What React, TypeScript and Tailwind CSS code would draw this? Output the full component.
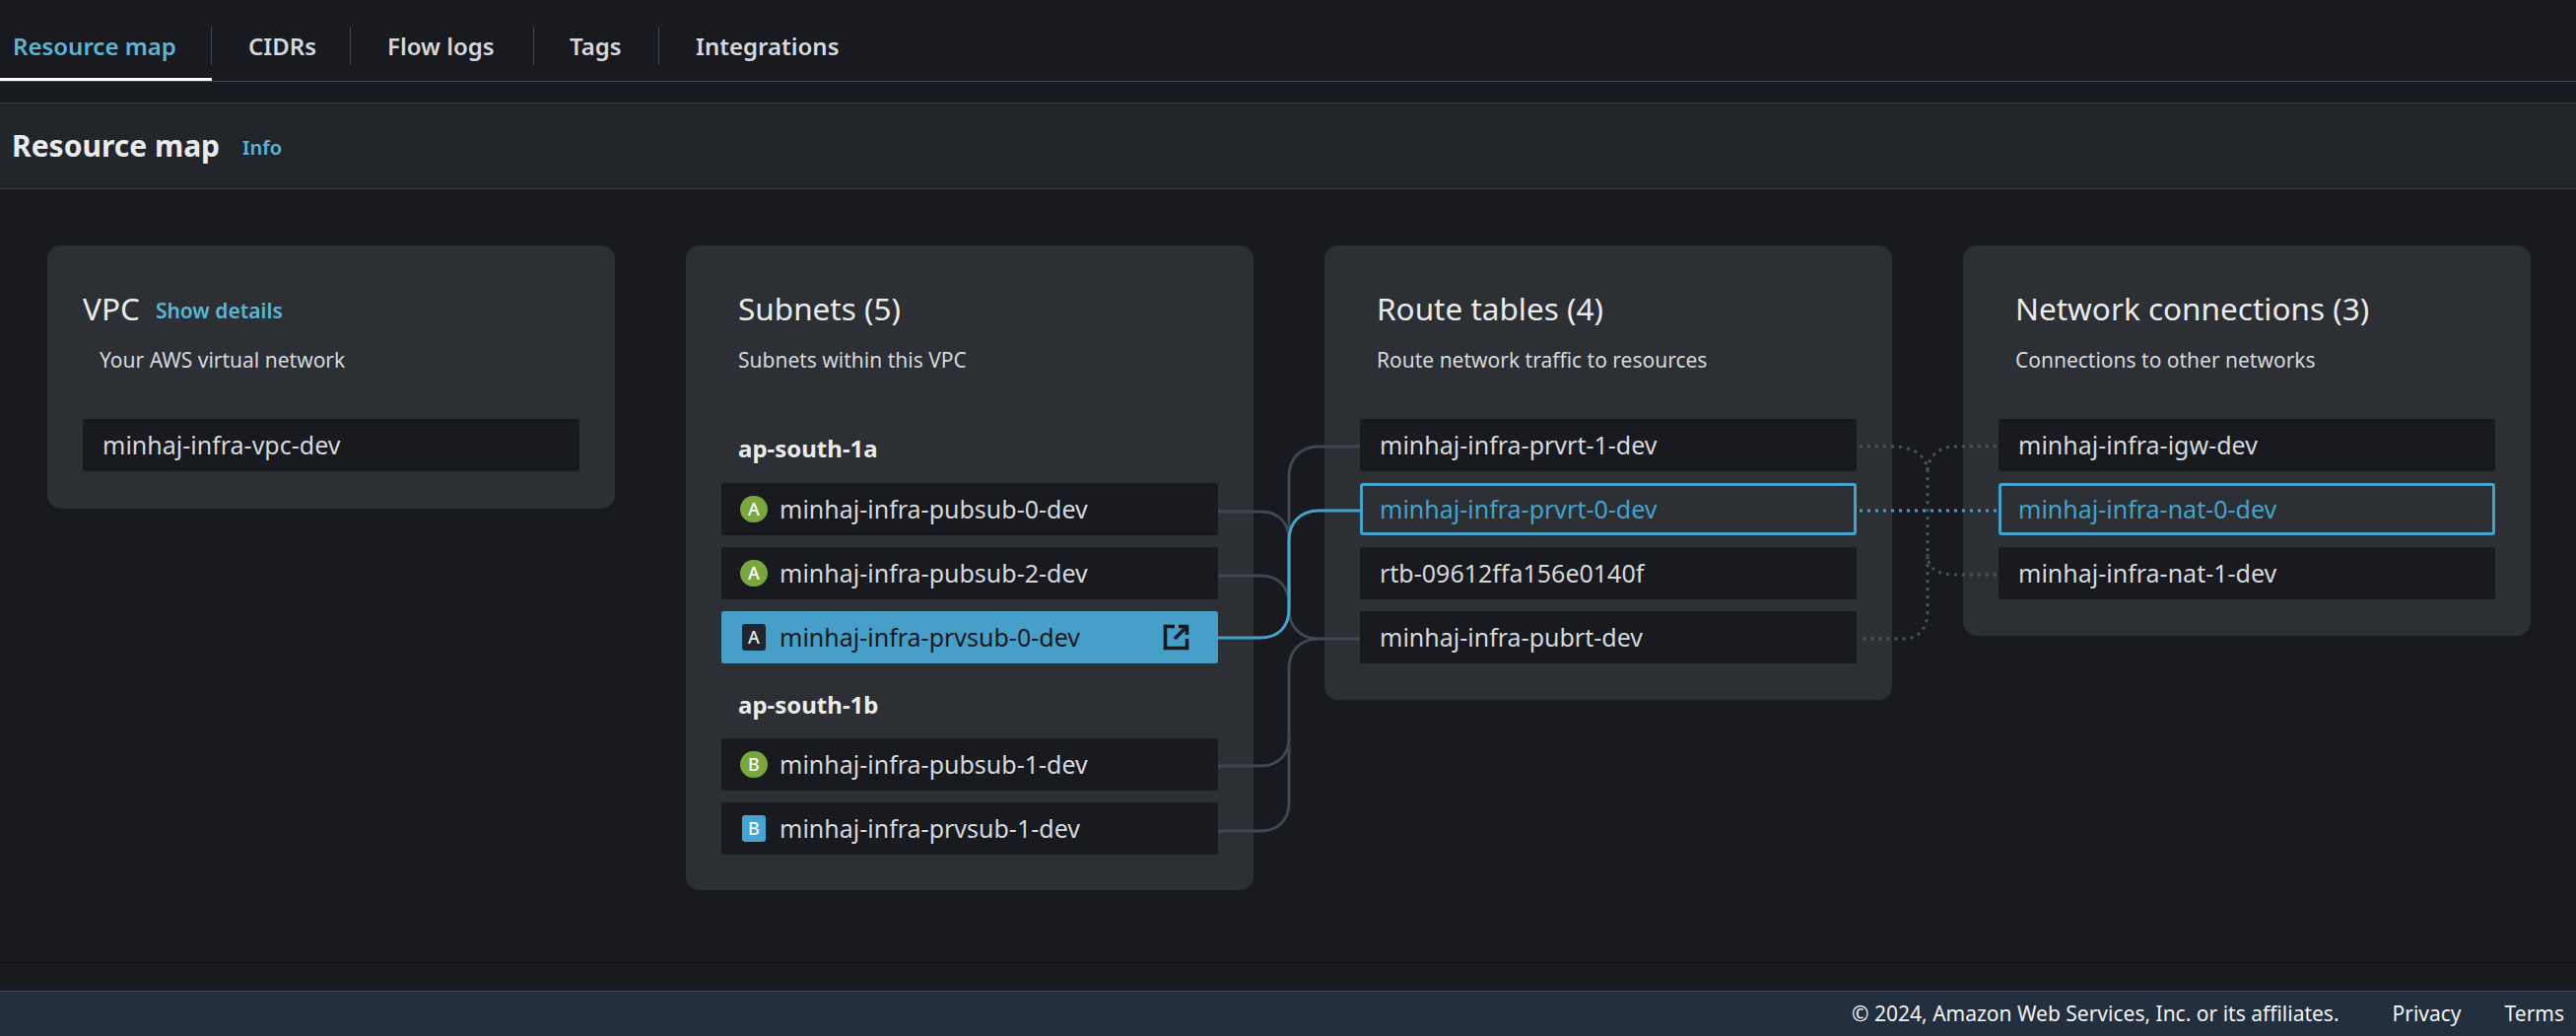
import React from "react";

const font = { fontFamily: '"Noto Sans", sans-serif' };

function Badge({ letter, kind }: { letter: string; kind: "pub" | "prv" | "sel" }) {
  const shape =
    kind === "pub"
      ? "rounded-full bg-[#7aa640] text-white w-[28px]"
      : kind === "prv"
      ? "rounded-[3px] bg-[#44a5d2] text-white w-[24px] mx-[2px]"
      : "rounded-[3px] bg-[#1f2630] text-[#e9ebed] w-[24px] mx-[2px]";
  return (
    <span className={`flex h-[27px] shrink-0 items-center justify-center text-[18px] font-medium ${shape}`}>
      {letter}
    </span>
  );
}

function Row({ name, h = "h-[53px]", className = "bg-[#181a1f] text-[#d5d8dc]" }: { name: string; h?: string; className?: string }) {
  return (
    <div className={`flex items-center rounded-[3px] px-[20px] text-[25px] ${h} ${className}`}>{name}</div>
  );
}

function SubnetRow({ name, letter, kind }: { name: string; letter: string; kind: "pub" | "prv" | "sel" }) {
  const sel = kind === "sel";
  return (
    <div className={`flex h-[53px] items-center rounded-[3px] pl-[19px] pr-[29px] text-[25px] ${sel ? "bg-[#469fc8] text-[#16191f]" : "bg-[#181a1f] text-[#d5d8dc]"}`}>
      <Badge letter={letter} kind={kind} />
      <span className="ml-[12px] flex-1">{name}</span>
      {sel && (
        <svg width="27" height="27" viewBox="0 0 27 27" fill="none" stroke="#16191f" strokeWidth="3.6">
          <path d="M12 2.5H2.5V24.5H24.5V15" />
          <path d="M16 2.5H24.5V11" />
          <path d="M24 3L12 15" />
        </svg>
      )}
    </div>
  );
}

function CardHead({ title, desc }: { title: string; desc: string }) {
  return (
    <div className="pl-[17px]">
      <h3 className="h-[36px] text-[31.5px] leading-[36px] font-normal text-[#e9ebed]">{title}</h3>
      <p className="mt-[20px] h-[28px] text-[21px] leading-[28px] text-[#d5d8dc]">{desc}</p>
    </div>
  );
}

const tabs = [
  { t: "Resource map", c: "w-[215px] pl-[13px] text-[#5bb5d6] border-r border-[#414750]" },
  { t: "CIDRs", c: "w-[141px] pl-[37px] text-[#d5d8dc] border-r border-[#414750]" },
  { t: "Flow logs", c: "w-[186px] pl-[37px] text-[#d5d8dc] border-r border-[#414750]" },
  { t: "Tags", c: "w-[127px] pl-[36px] text-[#d5d8dc] border-r border-[#414750]" },
  { t: "Integrations", c: "pl-[37px] text-[#d5d8dc]" },
];

export default function App() {
  return (
    <div className="relative flex h-[1051px] w-[2614px] flex-col overflow-hidden bg-[#181a1f]" style={font}>
      <div className="flex h-[83px] border-b border-[#414750]">
        {tabs.map(({ t, c }, i) => (
          <div key={t} className={`h-[82px] border-b-[3px] pt-[27px] ${i === 0 ? "border-white" : "border-transparent"}`}>
            <div className={`flex h-[39px] items-center text-[24px] font-semibold ${c}`}>{t}</div>
          </div>
        ))}
      </div>

      <div className="mt-[21px] flex h-[88px] items-center gap-[23px] border-y border-[#363a40] bg-[#22262b] pb-[2px] pl-[12px]">
        <h2 className="text-[30px] font-bold text-[#e9ebed]">Resource map</h2>
        <a className="mt-[6px] text-[20px] font-semibold text-[#5bb5d6]">Info</a>
      </div>

      <main className="flex flex-1 items-start gap-[72px] border-b border-[#0d0e12] pl-[48px] pt-[57px]">
        <section className="w-[576px] rounded-[14px] bg-[#2c2f34] px-[36px] pt-[46px] pb-[38px]">
          <div className="flex h-[36px] items-center gap-[16px]">
            <h3 className="text-[31.5px] leading-[36px] font-normal text-[#e9ebed]">VPC</h3>
            <a className="mt-[6px] text-[21px] font-semibold text-[#5bb5d6]">Show details</a>
          </div>
          <p className="mt-[20px] h-[28px] pl-[17px] text-[21px] leading-[28px] text-[#d5d8dc]">Your AWS virtual network</p>
          <div className="mt-[46px]">
            <Row name="minhaj-infra-vpc-dev" />
          </div>
        </section>

        <section className="w-[576px] rounded-[14px] bg-[#2c2f34] px-[36px] pt-[46px] pb-[36px]">
          <CardHead title="Subnets (5)" desc="Subnets within this VPC" />
          <h4 className="mt-[59px] mb-[18px] h-[34px] pl-[17px] text-[24px] leading-[34px] font-bold text-[#e9ebed]">ap-south-1a</h4>
          <div className="flex flex-col gap-[12px]">
            <SubnetRow name="minhaj-infra-pubsub-0-dev" letter="A" kind="pub" />
            <SubnetRow name="minhaj-infra-pubsub-2-dev" letter="A" kind="pub" />
            <SubnetRow name="minhaj-infra-prvsub-0-dev" letter="A" kind="sel" />
          </div>
          <h4 className="mt-[25px] mb-[17px] h-[34px] pl-[17px] text-[24px] leading-[34px] font-bold text-[#e9ebed]">ap-south-1b</h4>
          <div className="flex flex-col gap-[12px]">
            <SubnetRow name="minhaj-infra-pubsub-1-dev" letter="B" kind="pub" />
            <SubnetRow name="minhaj-infra-prvsub-1-dev" letter="B" kind="prv" />
          </div>
        </section>

        <section className="w-[576px] rounded-[14px] bg-[#2c2f34] px-[36px] pt-[46px] pb-[37px]">
          <CardHead title="Route tables (4)" desc="Route network traffic to resources" />
          <div className="mt-[46px] flex flex-col gap-[12px]">
            <Row name="minhaj-infra-prvrt-1-dev" />
            <Row name="minhaj-infra-prvrt-0-dev" className="border-[3px] border-[#44a3cc] pl-[17px] text-[#44a3cc]" />
            <Row name="rtb-09612ffa156e0140f" />
            <Row name="minhaj-infra-pubrt-dev" />
          </div>
        </section>

        <section className="w-[576px] rounded-[14px] bg-[#2c2f34] px-[36px] pt-[46px] pb-[37px]">
          <CardHead title="Network connections (3)" desc="Connections to other networks" />
          <div className="mt-[46px] flex flex-col gap-[12px]">
            <Row name="minhaj-infra-igw-dev" />
            <Row name="minhaj-infra-nat-0-dev" className="border-[3px] border-[#44a3cc] pl-[17px] text-[#44a3cc]" />
            <Row name="minhaj-infra-nat-1-dev" />
          </div>
        </section>
      </main>

      <div className="h-[28px]" />

      <footer className="flex h-[46px] items-center justify-end gap-[44px] border-t border-[#414750] bg-[#232f3e] pr-[12px] text-[21px] text-[#f2f3f3]">
        <span className="mr-[10px]">© 2024, Amazon Web Services, Inc. or its affiliates.</span>
        <span>Privacy</span>
        <span>Terms</span>
      </footer>

      <svg className="pointer-events-none absolute inset-0" width="2614" height="1051" viewBox="0 0 2614 1051" fill="none">
        <g stroke="#414750" strokeWidth="3">
          <path d="M1236 519H1279C1297 519 1308 530 1308 548V618C1308 636 1320 648 1338 648H1380" />
          <path d="M1236 584H1279C1297 584 1308 595 1308 613" />
          <path d="M1236 777H1279C1297 777 1308 766 1308 748" />
          <path d="M1236 843H1279C1297 843 1308 832 1308 814V678C1308 660 1320 648 1338 648" />
          <path d="M1380 453H1338C1320 453 1308 465 1308 483V620" />
        </g>
        <path d="M1236 647H1279C1297 647 1308 636 1308 618V548C1308 530 1320 518 1338 518H1380" stroke="#44a3cc" strokeWidth="3" />
        <g stroke="#4b5158" strokeWidth="3" strokeDasharray="3 5">
          <path d="M1887 453H1920C1942 453 1956 462 1956 480V620C1956 636 1948 648 1932 648H1887" />
          <path d="M2026 453H1984C1968 453 1956 462 1956 480" />
          <path d="M2026 583H1984C1968 583 1956 578 1956 562" />
        </g>
        <path d="M1887 518H2026" stroke="#44a3cc" strokeWidth="3" strokeDasharray="3 5" />
      </svg>
    </div>
  );
}
